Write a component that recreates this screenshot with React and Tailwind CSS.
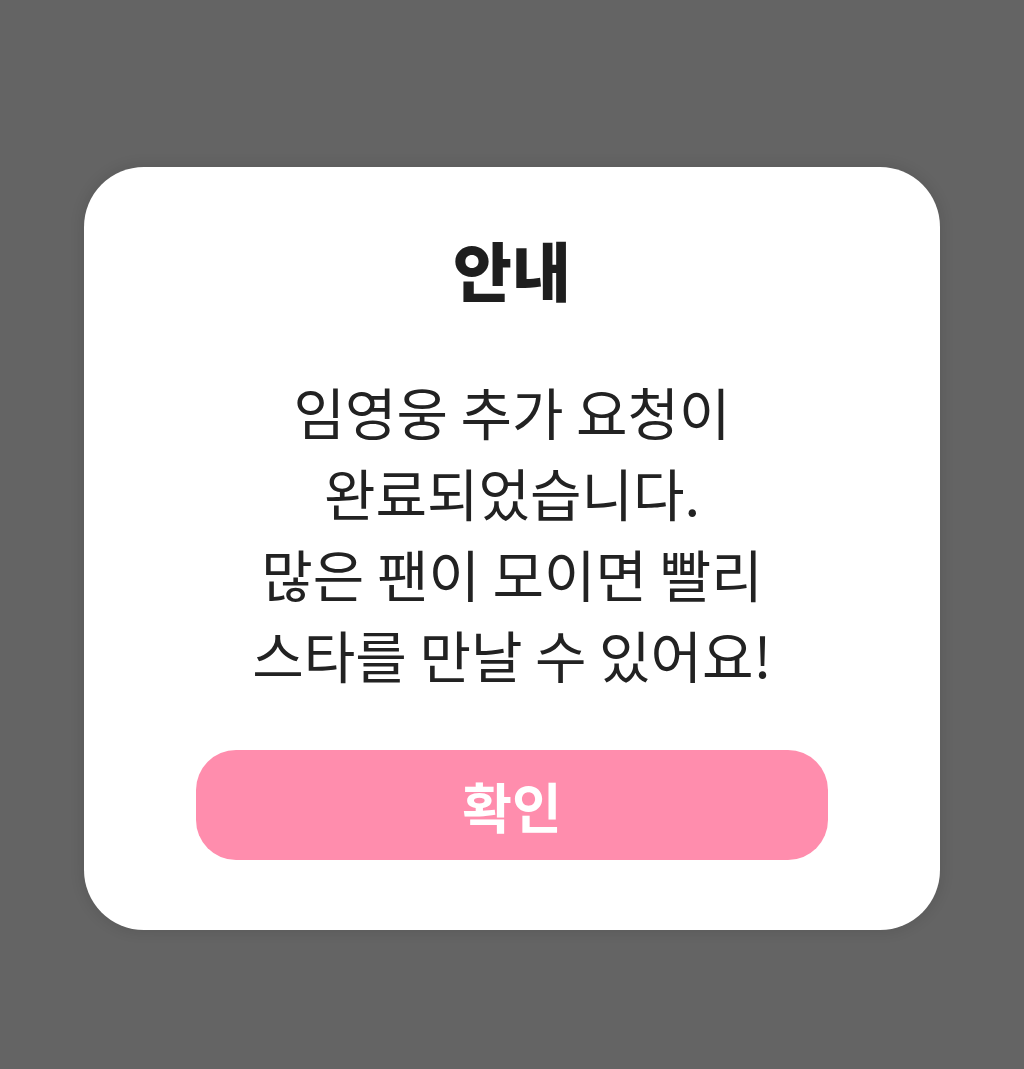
import React from 'react';

export default function App() {
  return (
    <div
      className="w-[1024px] h-[1069px] bg-[#646464] flex justify-center pt-[167px]"
      style={{ fontFamily: '"Noto Sans CJK KR", "Noto Sans", sans-serif' }}
    >
      <div className="w-[856px] h-[763px] bg-white rounded-[60px] shadow-[0_0_12px_4px_rgba(0,0,0,0.08)] flex flex-col items-center pt-[66px]">
        {/* Title */}
        <h2 className="text-[64px] leading-[70px] font-black text-[#1e1e1e]">안내</h2>

        {/* Message */}
        <p className="mt-[67px] text-[56px] leading-[81px] text-[#222222] text-center">
          임영웅 추가 요청이
          <br />
          완료되었습니다.
          <br />
          많은 팬이 모이면 빨리
          <br />
          스타를 만날 수 있어요!
        </p>

        {/* Confirm */}
        <button className="mt-[56px] w-[632px] h-[110px] rounded-[40px] bg-[#FF8DAD] text-white text-[54px] font-bold flex items-center justify-center">
          확인
        </button>
      </div>
    </div>
  );
}
